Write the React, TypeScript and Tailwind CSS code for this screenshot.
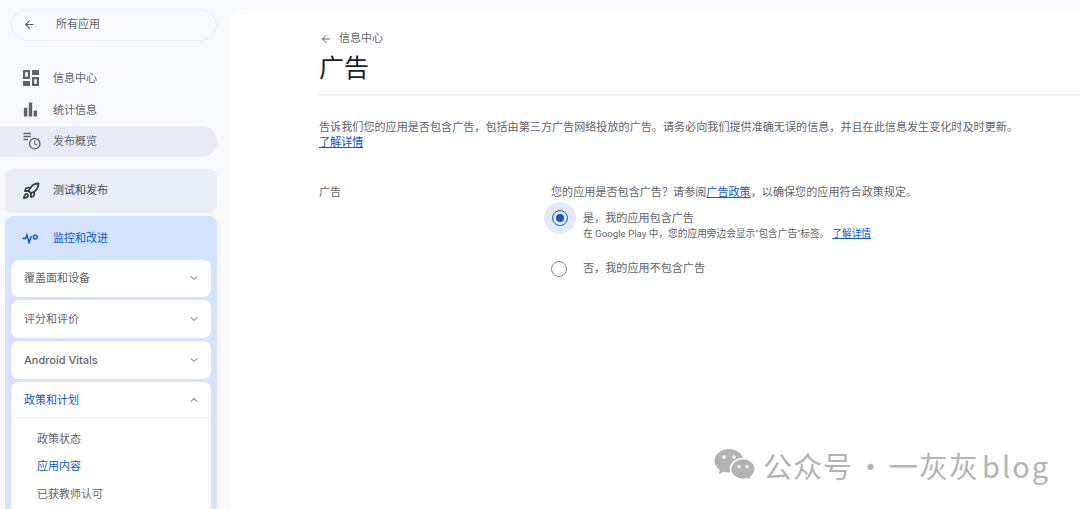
import { ArrowLeft, ChevronDown, ChevronUp, Rocket } from "lucide-react";

const font = "font-['Roboto','Noto_Sans_CJK_SC',sans-serif]";

const topItems = [
  { label: "信息中心", icon: <DashboardIcon /> },
  { label: "统计信息", icon: <BarsIcon /> },
];

const collapsed = ["覆盖面和设备", "评分和评价", "Android Vitals"];

function DashboardIcon() {
  return (
    <svg viewBox="0 0 16 16" className="h-[16px] w-[16px] fill-[#5f6368]">
      <path d="M0 0h7v9h-7zM2.200 2.200v4.600h2.600v-4.600zM9 0h7v5h-7zM9 7h7v9h-7zM11.200 9.200v4.600h2.600v-4.600zM0 11h7v5h-7z" fillRule="evenodd" />
    </svg>
  );
}

function BarsIcon() {
  return (
    <svg viewBox="0 0 16 16" className="h-[15px] w-[15px] fill-[#5f6368]">
      <path d="M1 6h3.600v9.500h-3.600zM6.200 .5h3.600v15h-3.600zM11.400 9h3.600v6.500h-3.600z" />
    </svg>
  );
}

function ReleaseIcon() {
  return (
    <svg viewBox="0 0 18 18" className="h-[18px] w-[18px] fill-none stroke-[#5f6368]">
      <path d="M0.500 1.500h7.500M0.500 4.500h7.500M0.500 7.500h4.500" strokeWidth="1.300" />
      <circle cx="11.700" cy="11.700" r="5.200" strokeWidth="1.400" />
      <path d="M11.700 8.500v3.400l2.200 1.100" strokeWidth="1.100" />
    </svg>
  );
}

function VitalsIcon() {
  return (
    <svg viewBox="0 0 18 12" className="h-[12px] w-[17px] fill-none stroke-[#0b57d0]">
      <path d="M0.500 6.500h3.200l1.500-4 2.300 8.500 2-6h1" strokeWidth="1.500" />
      <circle cx="14" cy="5" r="2" strokeWidth="1.500" />
    </svg>
  );
}

function WechatIcon() {
  return (
    <svg viewBox="0 0 42 34" className="h-[34px] w-[42px]">
      <path d="M15 1C7 1 .5 6.200.5 12.800c0 3.700 2 6.900 5.200 9.100L4.500 26.500l5-2.700c1.700.5 3.500.8 5.500.8 8 0 14.500-5.300 14.500-11.800S23 1 15 1z" fill="#b3b3b3" />
      <path d="M29 10.500c-6.800 0-12.500 4.700-12.500 10.500S22.200 31.500 29 31.500c1.500 0 3-.2 4.300-.7l4.200 2.200-1-3.700c2.900-1.900 4.700-4.900 4.700-8.300 0-5.800-5.400-10.500-12.200-10.500z" fill="#b3b3b3" stroke="#fff" strokeWidth="1.500" />
      <circle cx="10" cy="9" r="1.800" fill="#fff" />
      <circle cx="20" cy="9" r="1.800" fill="#fff" />
      <circle cx="25" cy="18.500" r="1.500" fill="#fff" />
      <circle cx="33" cy="18.500" r="1.500" fill="#fff" />
    </svg>
  );
}

function Sidebar() {
  return (
    <aside className="flex w-[230px] shrink-0 flex-col">
      <div className="mt-[9px] ml-[11px] flex h-[32px] w-[206px] items-center rounded-full border border-[#eceef5] pl-[11px] text-[11px] text-[#5f6368]">
        <ArrowLeft size={13} strokeWidth={2} />
        <span className="ml-[20px] pt-[1px]">所有应用</span>
      </div>

      <nav className="mt-[21px] flex flex-col text-[11px] text-[#5f6368]">
        {topItems.map((item) => (
          <div key={item.label} className="flex h-[32px] items-center pl-[23px]">
            <span className="flex w-[30px]">{item.icon}</span>
            <span className="pt-[3px]">{item.label}</span>
          </div>
        ))}
        <div className="flex h-[31px] w-[217px] items-center rounded-r-full bg-[#e8ebf6] pl-[23px]">
          <span className="flex w-[30px]"><ReleaseIcon /></span>
          <span className="pt-[2px]">发布概览</span>
        </div>
      </nav>

      <div className="mt-[12px] ml-[5px] flex h-[44px] w-[212px] items-center rounded-lg bg-[#e9edf6] pl-[17px] text-[11px] text-[#444746]">
        <span className="flex w-[31px]"><Rocket size={18} strokeWidth={2.400} className="text-[#3c4043]" /></span>
        <span className="pt-[2px]">测试和发布</span>
      </div>

      <div className="mt-[3px] ml-[5px] flex w-[212px] flex-1 flex-col rounded-t-lg bg-[#d3e3fd] px-[6px]">
        <div className="flex h-[44px] items-center pl-[11px] text-[11px] text-[#0b57d0]">
          <span className="flex w-[31px]"><VitalsIcon /></span>
          <span className="pt-[3px]">监控和改进</span>
        </div>
        <div className="flex flex-col gap-[3.300px]">
          {collapsed.map((label) => (
            <div key={label} className="flex h-[37.500px] items-center justify-between rounded-lg bg-white pr-[11px] pl-[13px] text-[11px] text-[#5f6368]">
              {label === "Android Vitals" ? (
                <span className="font-['Inter',sans-serif] font-medium">{label}</span>
              ) : (
                <span className="pt-[2px]">{label}</span>
              )}
              <ChevronDown size={12} strokeWidth={2} />
            </div>
          ))}
          <div className="h-[127px] rounded-t-lg bg-white text-[11px]">
            <div className="flex h-[36px] items-center justify-between border-b border-[#f3f4f6] pr-[11px] pl-[13px] text-[#0b57d0]">
              <span className="pt-[3px]">政策和计划</span>
              <ChevronUp size={12} strokeWidth={2} />
            </div>
            <ul className="mt-[8px] pl-[26px] text-[#5f6368]">
              <li className="flex h-[28px] items-center">政策状态</li>
              <li className="flex h-[27px] items-center text-[#0b57d0]">应用内容</li>
              <li className="flex h-[28px] items-center">已获教师认可</li>
            </ul>
          </div>
        </div>
      </div>
    </aside>
  );
}

export default function App() {
  return (
    <div className={`relative flex h-[509px] w-[1080px] overflow-hidden bg-[#f8f9fe] ${font}`}>
      <Sidebar />

      <main className="mt-[9px] flex-1 rounded-tl-2xl bg-white pt-[22px] pl-[89px]">
        <div className="flex items-center pl-[1px] text-[11px] leading-[16px] text-[#5f6368]">
          <ArrowLeft size={12} strokeWidth={2} />
          <span className="ml-[7px]">信息中心</span>
        </div>
        <h1 className="mt-[6px] text-[25px] leading-[32px] text-[#202124]">广告</h1>
        <div className="mt-[9px] h-[2px] bg-[#eeeff1]" />

        <p className="mt-[24px] w-[700px] text-[11.100px] leading-[16px] text-[#5f6368]">
          告诉我们您的应用是否包含广告，包括由第三方广告网络投放的广告。请务必向我们提供准确无误的信息，并且在此信息发生变化时及时更新。
          <a className="-mt-px block text-[#0b57d0] underline">了解详情</a>
        </p>

        <section className="mt-[34px] flex text-[11.100px] leading-[16px] text-[#5f6368]">
          <div className="w-[232px] shrink-0">广告</div>
          <div>
            <p>
              您的应用是否包含广告？请参阅<a className="text-[#0b57d0] underline">广告政策</a>，以确保您的应用符合政策规定。
            </p>
            <div className="mt-[1px] flex">
              <span className="-ml-[7px] flex h-[32px] w-[32px] shrink-0 items-center justify-center rounded-full bg-[#e1ebfb]">
                <span className="flex h-[16px] w-[16px] items-center justify-center rounded-full border-[1.500px] border-[#0b57d0]">
                  <span className="h-[8px] w-[8px] rounded-full bg-[#0b57d0]" />
                </span>
              </span>
              <div className="ml-[7px] pt-[9px]">
                <div className="leading-[15px]">是，我的应用包含广告</div>
                <div className="text-[9.700px] leading-[16px]">
                  在 Google Play 中，您的应用旁边会显示"包含广告"标签。
                  <a className="ml-[3px] text-[#0b57d0] underline">了解详情</a>
                </div>
              </div>
            </div>
            <div className="mt-[19px] flex items-center">
              <span className="h-[16px] w-[16px] shrink-0 rounded-full border-[1.500px] border-[#80868b]" />
              <span className="ml-[16px]">否，我的应用不包含广告</span>
            </div>
          </div>
        </section>
      </main>

      <div className="absolute top-[447px] left-[714px] flex items-center text-[#b3b3b3]">
        <WechatIcon />
        <span className="ml-[7px] flex text-[29px] leading-[36px] tracking-[1px] font-['Noto_Sans_CJK_SC',sans-serif]">
          公众号<span className="mx-[3px]">·</span>一灰灰<span className="ml-[3px] tracking-[2px]">blog</span>
        </span>
      </div>
    </div>
  );
}
